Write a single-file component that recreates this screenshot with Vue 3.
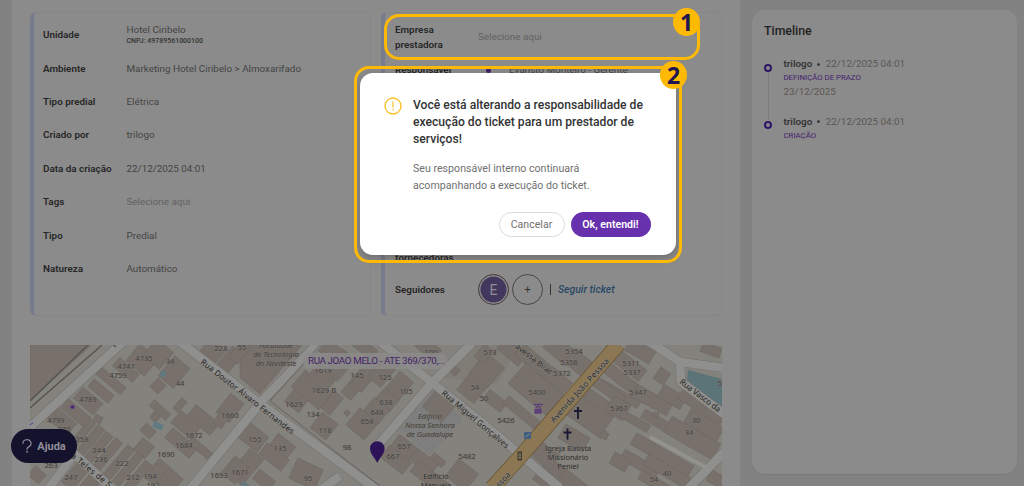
<template>
  <div class="page">
    <main class="content">
      <div class="cards">
        <section class="card">
          <div v-for="row in details" :key="row.label" class="row">
            <span class="label">{{ row.label }}</span>
            <span class="value" :class="{ placeholder: row.empty }">
              {{ row.value }}
              <small v-if="row.note">{{ row.note }}</small>
            </span>
          </div>
        </section>

        <section class="card card-right">
          <div class="row">
            <span class="label">Empresa prestadora</span>
            <span class="value placeholder">Selecione aqui</span>
          </div>
          <div class="row row-owner">
            <span class="label">Responsável</span>
            <span class="value owner"><i class="avatar"></i>Evaristo Monteiro - Gerente</span>
          </div>
          <div class="row row-suppliers">
            <span class="label">Empresas fornecedoras</span>
            <span class="value">-</span>
          </div>
          <div class="row row-followers">
            <span class="label">Seguidores</span>
            <span class="value followers">
              <b class="follower">E</b>
              <b class="follower add">+</b>
              <i class="divider"></i>
              <a class="follow">Seguir ticket</a>
            </span>
          </div>
        </section>
      </div>

      <svg class="map" viewBox="30 345 692 141" width="692" height="141">
        <rect x="30" y="345" width="692" height="141" fill="#84827c" />
        <polygon points="476,345 520,345 497,384 440,378" fill="#807c76" />
        <polygon points="432,388 463,419 430,455 397,428" fill="#7e7e7e" />
        <g class="buildings">
          <polygon points="30,345 107,345 30,401" />
          <polygon points="240,345 302,345 260,394 240,378" />
          <rect
            v-for="(b, i) in buildings"
            :key="i"
            :x="-b[2] / 2"
            :y="-b[3] / 2"
            :width="b[2]"
            :height="b[3]"
            :transform="`translate(${b[0]} ${b[1]}) rotate(${b[4]})`"
          />
        </g>
        <polygon points="688,370 722,379 722,406 697,390 687,380" fill="#5c7478" />
        <g fill="#5f7a80">
          <rect x="-3" y="-2.5" width="6" height="5" transform="translate(163 374) rotate(-50)" />
          <rect x="-5" y="-3" width="10" height="6" transform="translate(158 426) rotate(20)" />
          <path d="M240 485l4-4 6 5z" />
        </g>
        <polygon points="30,401 92,345 116,345 30,418" fill="#84827c" />
        <g class="rails">
          <path d="M30 401L88 345M30 408L102 345" />
        </g>
        <g class="road-edge">
          <path v-for="r in roads" :key="r" :d="r" />
        </g>
        <g class="road">
          <path v-for="r in roads" :key="r" :d="r" />
        </g>
        <path d="M270 401L319 439 368 477 380 486" class="lane" />
        <path d="M270 401L320 345" class="lane" />
        <path d="M650 437L707 468" stroke="#92928f" stroke-width="4" fill="none" />
        <path d="M618.500 344L520 457L492 488" class="avenue-edge" />
        <path d="M618.500 344L520 457L492 488" class="avenue" />

        <g class="numbers">
          <text v-for="n in numbers" :key="n[0] + n[1]" :x="n[1]" :y="n[2]">{{ n[0] }}</text>
        </g>
        <g class="streets">
          <text
            v-for="s in streets"
            :key="s[0] + s[1]"
            :transform="`translate(${s[1]} ${s[2]}) rotate(${s[3]})`"
            :textLength="s[4]"
          >{{ s[0] }}</text>
        </g>
        <g class="places">
          <text x="276" y="348">Faculdade</text>
          <text x="276" y="357">de Tecnologia</text>
          <text x="276" y="366">do Nordeste</text>
          <text x="430" y="419">Edifício</text>
          <text x="430" y="428">Nossa Senhora</text>
          <text x="430" y="437">de Guadalupe</text>
        </g>
        <g class="places dark">
          <text x="436" y="478.500">Edifício</text>
          <text x="436" y="487.500">Manuela</text>
          <text x="568" y="451">Igreja Batista</text>
          <text x="568" y="460">Missionário</text>
          <text x="568" y="469">Peniel</text>
        </g>

        <path d="M578 407v12M574 411h8M567.500 428.500v11M563.500 432.500h8" stroke="#181832" stroke-width="1.800" />
        <circle cx="72.500" cy="407" r="2" fill="#44246c" stroke="#674f80" />
        <path d="M30 425q2-2 3-2" stroke="#44339a" fill="none" />
        <g fill="none" stroke="#5c4078" stroke-width="1.300">
          <path d="M534 404.500h9M536 408.500v-1q2.500-2.500 4 0v1" />
          <path d="M535 409.500h6v3.500h-6z" fill="#5c4078" />
        </g>
        <rect x="524" y="432" width="7" height="7" rx="1" fill="#3f5f80" />
        <path d="M525.500 437l4-3" stroke="#8a8a8a" />
        <rect x="518" y="452" width="3.500" height="8" fill="#5e5744" stroke="#3b382f" />
        <path d="M518 455h3.500M518 457.500h3.500" stroke="#8f8068" stroke-width=".7" />

        <rect x="303" y="353" width="144" height="16" rx="7" fill="#8b8b8b" opacity=".85" />
        <text x="308" y="364" class="address" textLength="137">RUA JOAO MELO - ATE 369/370,...</text>
        <path d="M377.300 463c-2-5-7.300-9-7.300-14.500a7.300 7.300 0 0 1 14.600 0c0 5.500-5.300 9.500-7.300 14.500z" fill="#2d1458" />
      </svg>
    </main>

    <aside class="timeline">
      <h2>Timeline</h2>
      <ol>
        <li v-for="item in timeline" :key="item.action">
          <p class="who"><b>trilogo</b><i></i>22/12/2025 04:01</p>
          <p class="action">{{ item.action }}</p>
          <p v-if="item.date" class="date">{{ item.date }}</p>
        </li>
      </ol>
    </aside>

    <button class="help">
      <svg width="10" height="14" viewBox="0 0 10 14">
        <path d="M1 4.500a4 3.700 0 1 1 6 3.100C5.500 8.400 5 8.800 5 10.300" fill="none" stroke="#8f8d9c" stroke-width="1.200" stroke-linecap="round" />
        <circle cx="5" cy="12.700" r=".9" fill="#8f8d9c" />
      </svg>
      Ajuda
    </button>

    <div class="modal">
      <svg class="warn" width="18" height="18" viewBox="0 0 18 18">
        <circle cx="9" cy="9" r="8" fill="none" stroke="#fbbd1e" stroke-width="1.300" />
        <path d="M9 4.500v6" stroke="#fbbd1e" stroke-width="1.200" />
        <circle cx="9" cy="12.800" r=".8" fill="#fbbd1e" />
      </svg>
      <div class="modal-body">
        <h3>Você está alterando a responsabilidade de<br>execução do ticket para um prestador de<br>serviços!</h3>
        <p>Seu responsável interno continuará<br>acompanhando a execução do ticket.</p>
        <div class="actions">
          <button class="btn">Cancelar</button>
          <button class="btn primary">Ok, entendi!</button>
        </div>
      </div>
    </div>

    <div class="mark mark-one"><span>1</span></div>
    <div class="mark mark-two"><span>2</span></div>
  </div>
</template>

<script setup>
const details = [
  { label: 'Unidade', value: 'Hotel Ciribelo', note: 'CNPJ: 49789561000100' },
  { label: 'Ambiente', value: 'Marketing Hotel Ciribelo > Almoxarifado' },
  { label: 'Tipo predial', value: 'Elétrica' },
  { label: 'Criado por', value: 'trilogo' },
  { label: 'Data da criação', value: '22/12/2025 04:01' },
  { label: 'Tags', value: 'Selecione aqui', empty: true },
  { label: 'Tipo', value: 'Predial' },
  { label: 'Natureza', value: 'Automático' }
]

const timeline = [
  { action: 'DEFINIÇÃO DE PRAZO', date: '23/12/2025' },
  { action: 'CRIAÇÃO' }
]

const roads = [
  'M26 431L124 341',
  'M180 342L245 392L293 428L376 489',
  'M318 343L262 401L190 489',
  'M380 342L430 381L485 425L523 457L560 488',
  'M472 343L430 385L379 444',
  'M60 440L112 489',
  'M74 455L48 489',
  'M650 342L680 362L724 368',
  'M680 362L681 382L724 414',
  'M724 452L688 489',
  'M340 476L322 489'
]

// cx, cy, width, height, rotation
const buildings = [
  [142, 360, 24, 22, 40], [158, 354, 22, 22, 40], [174, 372, 20, 26, 40],
  [158, 386, 11, 12, 45], [111, 381, 32, 9, 40], [126, 370, 26, 11, 40],
  [101, 391, 26, 10, 40], [88, 401, 26, 15, 40], [76, 413, 30, 12, 40],
  [62, 421, 26, 15, 40], [98, 419, 8, 7, 30], [180, 405, 14, 7, -50],
  [160, 410, 22, 8, 42], [155, 417, 8, 8, 42], [148, 431, 13, 10, 42],
  [186, 425, 26, 16, 40], [203, 420, 30, 15, 40], [181, 443, 32, 13, 40],
  [200, 448, 26, 8, 40], [230, 408, 17, 24, 38], [221, 420, 11, 14, 38],
  [82, 434, 8, 34, 40], [90, 441, 9, 36, 40], [98, 448, 9, 36, 40],
  [107, 455, 9, 38, 40], [119, 462, 9, 38, 40], [128, 469, 9, 38, 40],
  [138, 476, 9, 34, 40], [144, 448, 15, 15, 40], [157, 472, 14, 24, 40],
  [170, 481, 18, 20, 40], [37, 475, 14, 12, 40], [75, 476, 14, 26, 40],
  [88, 487, 14, 20, 40], [212, 352, 20, 18, 40], [228, 362, 14, 30, 40],
  [240, 352, 12, 22, 40], [253, 437, 25, 19, 38], [281, 448, 22, 20, 38],
  [274, 457, 28, 14, 38], [306, 474, 28, 22, 25], [246, 467, 18, 34, 40],
  [264, 480, 20, 12, 38], [235, 470, 18, 22, 40], [297, 400, 18, 18, 38],
  [312, 390, 22, 36, -50], [325, 374, 24, 28, 40], [332, 403, 12, 22, 40],
  [324, 426, 20, 20, 38], [340, 365, 17, 28, 40], [356, 384, 13, 32, 40],
  [367, 375, 14, 34, 40], [384, 371, 16, 30, 40], [399, 386, 18, 24, 40],
  [387, 400, 19, 16, 40], [376, 411, 20, 19, 40], [362, 424, 24, 22, 40],
  [347, 413, 5, 5, 40], [365, 348, 24, 12, 40], [330, 350, 26, 16, 40],
  [402, 450, 23, 22, 38], [396, 460, 28, 15, 38], [424, 462, 26, 14, 38],
  [438, 460, 15, 7, 40], [430, 478, 40, 14, 38], [462, 475, 25, 22, 38],
  [439, 406, 25, 22, 40], [428, 348, 24, 14, 40], [454, 370, 10, 8, 40],
  [473, 387, 22, 25, 38], [487, 370, 24, 26, 40], [495, 401, 22, 12, 38],
  [484, 354, 12, 16, 40], [512, 352, 28, 14, 40], [530, 358, 28, 15, 40],
  [544, 370, 28, 15, 40], [558, 380, 26, 14, 40], [541, 385, 52, 14, 40],
  [531, 395, 50, 12, 40], [522, 413, 42, 10, 40], [560, 350, 30, 18, 40],
  [579, 363, 24, 18, 40], [626, 363, 42, 14, 38], [619, 377, 46, 12, 38],
  [618, 393, 48, 8, 30], [652, 400, 40, 14, 28], [672, 397, 26, 14, 30],
  [591, 411, 44, 12, 35], [584, 421, 48, 10, 35], [598, 401, 44, 11, 35],
  [609, 391, 34, 10, 35], [618, 408, 20, 18, 30], [633, 420, 36, 8, 30],
  [604, 435, 8, 7, 30], [574, 438, 28, 16, 30], [662, 376, 12, 14, 35],
  [640, 351, 28, 14, 30], [670, 429, 62, 10, 30], [662, 455, 66, 13, 30],
  [640, 464, 40, 11, 30], [667, 471, 48, 12, 30], [620, 462, 18, 13, 30],
  [692, 438, 56, 18, 30], [704, 425, 38, 16, 30], [702, 406, 50, 13, 32],
  [655, 483, 34, 10, 30], [553, 477, 30, 28, 38], [575, 486, 36, 16, 38],
  [546, 456, 22, 18, 38], [656, 415, 5, 5, 0], [711, 350, 20, 10, 20], [716, 479, 16, 12, 30]
]

const numbers = [
  ['4735', 144, 361], ['34', 170, 364], ['4747', 126, 369], ['4759', 118, 378],
  ['44', 180, 386], ['4789', 88, 402], ['4799', 56, 423], ['270', 64, 432],
  ['258', 82, 442], ['1660', 230, 418], ['1672', 194, 438], ['1684', 184, 448],
  ['1690', 166, 457], ['244', 99, 453], ['236', 101, 462], ['222', 122, 466],
  ['212', 133, 480], ['194', 150, 479], ['192', 153, 488], ['263', 51, 468],
  ['247', 71, 480], ['1693', 219, 478], ['1671', 240, 475], ['228', 221, 350.5],
  ['55', 242, 350], ['155', 255, 442], ['135', 280, 451], ['95', 308, 481],
  ['1629 B', 324, 393], ['1629', 294, 407], ['134', 313, 417], ['118', 325, 433],
  ['1619', 323, 373], ['145', 357, 378], ['125', 385, 380], ['105', 406, 394],
  ['638', 386, 405], ['648', 377, 415], ['658', 367, 424], ['98', 347, 450],
  ['657', 404, 449], ['667', 393, 459], ['5482', 467, 459], ['100', 431, 355],
  ['573', 490, 355], ['54', 475, 390], ['50', 484, 401], ['5354', 574, 354],
  ['5358', 569, 365], ['5372', 562, 376], ['5400', 537, 395], ['5426', 506, 423],
  ['5311', 631, 366], ['5337', 632, 375], ['5347', 638, 395], ['5367', 619, 411],
  ['30', 696, 423], ['34', 689, 435], ['40', 667, 476], ['54', 654, 482], ['5', 720, 386]
]

// name, x, y, rotation, length
const streets = [
  ['Rua Doutor Álvaro Fernandes', 200, 363, 38, 116],
  ['Rua Miguel Gonçalves', 441, 394, 40, 85],
  ['Avenida João Pessoa', 554, 423, -48, 83],
  ['Pessoa', 493, 495, -48, 27],
  ['Travessa Bilac', 509, 343, 38, 52],
  ['Rua Vasco da', 679, 383, 37, 49],
  ['Rua Teles de S', 62, 450, 39, 60],
  ['R', 115, 348, -42, 6]
]
</script>

<style>
body {
  margin: 0;
  background: #828282;
}
</style>

<style scoped>
.page {
  position: relative;
  display: flex;
  box-sizing: border-box;
  width: 1024px;
  height: 486px;
  padding: 0 7px 0 12px;
  gap: 12px;
  overflow: hidden;
  background: #828282;
  color: #444;
  font-family: Roboto, "Liberation Sans", sans-serif;
  font-size: 9.85px;
}

p, h2, h3, ol {
  margin: 0;
  padding: 0;
}

button {
  font: inherit;
  border: 0;
}

.content {
  box-sizing: border-box;
  width: 728px;
  padding: 12px 18px 0;
  background: #8b8b8b;
}

.cards {
  display: flex;
  gap: 10px;
}

.card {
  box-sizing: border-box;
  width: 341px;
  height: 304px;
  padding: 5px 0 0 9px;
  border: 1px solid #868686;
  border-left: 4px solid #777b8b;
  border-radius: 6px;
}

.row {
  display: flex;
  align-items: center;
  height: 33.4px;
}

.label {
  width: 83.5px;
  color: #262626;
  font-weight: 600;
  line-height: 15px;
}

.value small {
  display: block;
  margin-top: 2px;
  color: #333;
  font-size: 7px;
  font-weight: 500;
  line-height: 8px;
}

.placeholder {
  color: #646160;
}

.card-right {
  padding: 7px 0 0 10px;
}

.card-right .label {
  flex: none;
  box-sizing: border-box;
  width: 83px;
  padding-right: 20px;
}

.row-owner {
  margin-top: -1px;
}

.owner {
  display: flex;
  align-items: center;
}

.avatar {
  display: flex;
  justify-content: center;
  width: 20px;
  height: 6px;
  margin-right: 11px;
  border-top: 1px dotted #66606c;
}

.avatar::before {
  content: "";
  width: 5px;
  height: 5px;
  margin-top: 1px;
  border-radius: 50%;
  background: #3e2468;
}

.row-suppliers {
  margin-top: 148px;
}

.row-followers {
  margin-top: 6px;
}

.followers {
  display: flex;
  align-items: center;
}

.follower {
  display: flex;
  align-items: center;
  justify-content: center;
  box-sizing: border-box;
  width: 31px;
  height: 31px;
  margin-right: 3px;
  border: 1px solid #4b4540;
  border-radius: 50%;
  background: #42375c;
  box-shadow: inset 0 0 0 1.5px #8b8b8b;
  color: #8f8d96;
  font-size: 14px;
  font-weight: 400;
}

.follower.add {
  background: none;
  box-shadow: none;
  color: #333;
  font-size: 11px;
}

.divider {
  width: 1px;
  height: 11px;
  margin: 0 7px 0 4px;
  background: #333;
}

.follow {
  color: #284866;
  font-size: 10.4px;
  font-style: italic;
  font-weight: 500;
}

.map {
  display: block;
  margin-top: 29px;
}

.buildings {
  fill: #78706b;
  stroke: #6c6560;
  stroke-width: 0.5;
}

.rails path {
  fill: none;
  stroke: #55544f;
  stroke-width: 1.4;
}

.road path,
.road-edge path {
  fill: none;
  stroke: #8f8f8e;
  stroke-width: 8.5;
  stroke-linejoin: round;
}

.road-edge path {
  stroke: #76736e;
  stroke-width: 9.7;
}

.lane {
  fill: none;
  stroke: #5d5a58;
  stroke-width: 0.8;
}

.avenue,
.avenue-edge {
  fill: none;
  stroke: #8c7754;
  stroke-width: 14;
}

.avenue-edge {
  stroke: #685534;
  stroke-width: 15.5;
}

.map text {
  font-family: "Noto Sans", sans-serif;
}

.numbers text {
  fill: #403c3a;
  stroke: #817c77;
  stroke-width: 0.8;
  paint-order: stroke;
  font-size: 7.6px;
  text-anchor: middle;
}

.streets text {
  fill: #282725;
  stroke: #8c8b87;
  stroke-width: 0.8;
  paint-order: stroke;
  font-size: 8px;
}

.places text {
  fill: #403c3a;
  stroke: #827e78;
  stroke-width: 0.6;
  paint-order: stroke;
  font-size: 7.5px;
  font-style: italic;
  text-anchor: middle;
}

.places.dark text {
  fill: #303030;
  font-style: normal;
}

.map .address {
  fill: #442366;
  font-family: Roboto, sans-serif;
  font-size: 9.8px;
}

.timeline {
  box-sizing: border-box;
  width: 265px;
  height: 464px;
  margin-top: 10px;
  padding: 13px 12px;
  border-radius: 13px;
  background: #8b8b8b;
  box-shadow: 0 1px 1px #7b7b7b;
}

.timeline h2 {
  color: #222;
  font-size: 12.3px;
  font-weight: 500;
  line-height: 17px;
}

.timeline ol {
  margin-top: 17px;
  list-style: none;
}

.timeline li {
  position: relative;
  height: 57.5px;
  padding-left: 19.5px;
}

.timeline li::before {
  content: "";
  position: absolute;
  top: 6.5px;
  left: 0;
  box-sizing: border-box;
  width: 8px;
  height: 8px;
  border: 2px solid #2e1766;
  border-radius: 50%;
}

.timeline li:first-child::after {
  content: "";
  position: absolute;
  top: 15px;
  left: 3.5px;
  width: 1px;
  height: 48px;
  background: #7d7d7d;
}

.who,
.date {
  color: #5b5754;
  line-height: 14px;
}

.who {
  display: flex;
  align-items: center;
}

.who b {
  color: #333;
  font-weight: 600;
}

.who i {
  width: 3px;
  height: 3px;
  margin: 0 6px 0 4.5px;
  border-radius: 50%;
  background: #3c3c3c;
}

.action {
  color: #43216f;
  font-size: 7.8px;
  line-height: 14px;
}

.help {
  position: absolute;
  left: 11px;
  top: 429px;
  display: flex;
  align-items: center;
  justify-content: center;
  gap: 5px;
  box-sizing: border-box;
  width: 66px;
  height: 34px;
  padding: 0;
  border-radius: 17px;
  background: #15122d;
  color: #918f9b;
  font-size: 11px;
  font-weight: 700;
}

.modal {
  position: absolute;
  left: 360px;
  top: 73px;
  display: flex;
  gap: 11px;
  box-sizing: border-box;
  width: 315.5px;
  height: 182px;
  padding: 24px 25px 0 24px;
  border-radius: 13px;
  background: #fff;
  box-shadow: 0 3px 10px rgba(0, 0, 0, 0.22);
}

.warn {
  flex: none;
}

.modal-body {
  flex: 1;
  white-space: nowrap;
}

.modal h3 {
  color: #333;
  font-size: 12.15px;
  font-weight: 500;
  line-height: 17px;
}

.modal p {
  margin-top: 13px;
  color: #707070;
  font-size: 10.65px;
  line-height: 16.7px;
}

.actions {
  display: flex;
  justify-content: flex-end;
  gap: 6px;
  margin-top: 18px;
}

.btn {
  box-sizing: border-box;
  width: 66px;
  height: 25px;
  padding: 0;
  border: 1px solid #dcdcdc;
  border-radius: 13px;
  background: #fff;
  color: #707070;
  font-size: 10.6px;
}

.btn.primary {
  width: 80px;
  border: 0;
  background: #6730ad;
  color: #fff;
  font-weight: 600;
}

.mark {
  position: absolute;
  box-sizing: border-box;
  border: 3px solid #fdb903;
  border-radius: 15px;
}

.mark span {
  position: absolute;
  display: flex;
  align-items: center;
  justify-content: center;
  width: 27px;
  height: 28px;
  border-radius: 50%;
  background: #fdb903;
  color: #22164e;
  font-family: "Open Sans", sans-serif;
  font-size: 23px;
  font-weight: 700;
}

.mark-one {
  left: 384px;
  top: 14px;
  width: 316px;
  height: 46px;
}

.mark-one span {
  top: -9px;
  right: -3px;
}

.mark-two {
  left: 354px;
  top: 66px;
  width: 328px;
  height: 197px;
}

.mark-two span {
  top: -8px;
  right: -8px;
}
</style>
